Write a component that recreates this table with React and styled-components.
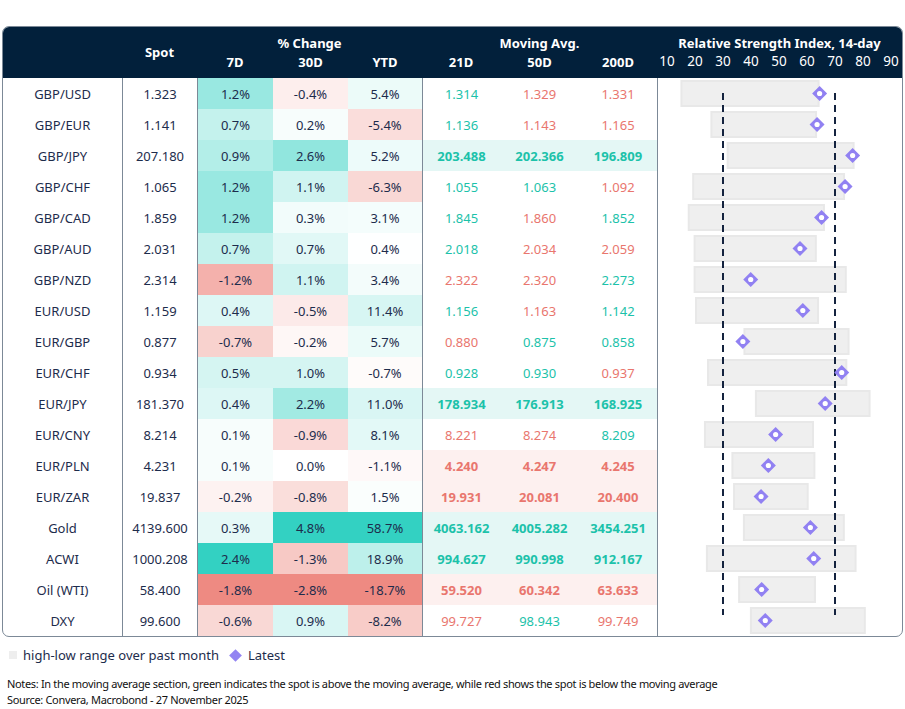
import React from 'react';
import styled, { createGlobalStyle } from 'styled-components';

const GlobalStyle = createGlobalStyle`
  body {
    margin: 0;
    background: #ffffff;
    font-family: 'Noto Sans', 'Open Sans', sans-serif;
    color: #1d2c4c;
  }
`;

const COLS = '119px 75px 76px 75px 74px 78px 79px 78px 245px';
const RULE = '#7c8997';
const ROW_H = 31;

// name, spot, 7D, 30D, YTD, 21D, 50D, 200D, rsi [low, high, latest]
const rows = [
  ['GBP/USD', '1.323', 1.2, -0.4, 5.4, '1.314', '1.329', '1.331', [14.8, 64.5, 64.5]],
  ['GBP/EUR', '1.141', 0.7, 0.2, -5.4, '1.136', '1.143', '1.165', [25.5, 63.6, 63.6]],
  ['GBP/JPY', '207.180', 0.9, 2.6, 5.2, '203.488', '202.366', '196.809', [31.3, 77.0, 76.3]],
  ['GBP/CHF', '1.065', 1.2, 1.1, -6.3, '1.055', '1.063', '1.092', [19.0, 73.6, 73.6]],
  ['GBP/CAD', '1.859', 1.2, 0.3, 3.1, '1.845', '1.860', '1.852', [17.4, 66.4, 65.2]],
  ['GBP/AUD', '2.031', 0.7, 0.7, 0.4, '2.018', '2.034', '2.059', [19.5, 63.5, 57.5]],
  ['GBP/NZD', '2.314', -1.2, 1.1, 3.4, '2.322', '2.320', '2.273', [19.5, 74.2, 39.9]],
  ['EUR/USD', '1.159', 0.4, -0.5, 11.4, '1.156', '1.163', '1.142', [20.0, 64.3, 58.5]],
  ['EUR/GBP', '0.877', -0.7, -0.2, 5.7, '0.880', '0.875', '0.858', [37.3, 75.2, 37.1]],
  ['EUR/CHF', '0.934', 0.5, 1.0, -0.7, '0.928', '0.930', '0.937', [24.3, 74.4, 72.4]],
  ['EUR/JPY', '181.370', 0.4, 2.2, 11.0, '178.934', '176.913', '168.925', [41.4, 82.7, 66.5]],
  ['EUR/CNY', '8.214', 0.1, -0.9, 8.1, '8.221', '8.274', '8.209', [23.2, 62.5, 48.8]],
  ['EUR/PLN', '4.231', 0.1, 0.0, -1.1, '4.240', '4.247', '4.245', [33.0, 63.0, 46.2]],
  ['EUR/ZAR', '19.837', -0.2, -0.8, 1.5, '19.931', '20.081', '20.400', [33.6, 60.6, 43.6]],
  ['Gold', '4139.600', 0.3, 4.8, 58.7, '4063.162', '4005.282', '3454.251', [37.1, 73.5, 61.2]],
  ['ACWI', '1000.208', 2.4, -1.3, 18.9, '994.627', '990.998', '912.167', [23.9, 77.7, 62.4]],
  ['Oil (WTI)', '58.400', -1.8, -2.8, -18.7, '59.520', '60.342', '63.633', [35.4, 63.2, 43.8]],
  ['DXY', '99.600', -0.6, 0.9, -8.2, '99.727', '98.943', '99.749', [39.6, 81.0, 45.1]],
];

const TEAL = [51, 209, 194];
const SALMON = [238, 138, 130];
const GREEN_TXT = '#1cc2aa';
const RED_TXT = '#e9766e';

const mix = (rgb, t) =>
  `rgb(${rgb.map((c) => Math.round(255 - (255 - c) * t)).join(',')})`;

const colMax = [2, 3, 4].map((i) => ({
  pos: Math.max(...rows.map((r) => r[i])),
  neg: Math.min(...rows.map((r) => r[i])),
}));

const heat = (v, c) => {
  if (v === 0) return '#ffffff';
  return v > 0 ? mix(TEAL, v / colMax[c].pos) : mix(SALMON, v / colMax[c].neg);
};

const num = (s) => parseFloat(s);

const Page = styled.div`
  padding: 26px 0 0 2px;
  width: 905px;
  box-sizing: border-box;
`;

const Panel = styled.div`
  width: 901px;
  border: 1px solid ${RULE};
  border-radius: 7px;
  overflow: hidden;
  box-sizing: border-box;
`;

const Head = styled.div`
  display: grid;
  grid-template-columns: ${COLS};
  grid-template-rows: 19px 19px;
  padding: 6px 0 7px;
  background: #02203b;
  color: #ffffff;
  font-weight: 700;
  font-size: 13px;
`;

const HeadCell = styled.div`
  grid-column: ${(p) => p.$col};
  grid-row: ${(p) => p.$row};
  display: flex;
  align-items: center;
  justify-content: center;
  white-space: nowrap;
`;

const Axis = styled.div`
  grid-column: 9;
  grid-row: 2;
  display: flex;
  margin-left: -4px;
  font-weight: 400;
  font-size: 13.5px;
`;

const Tick = styled.span`
  flex: none;
  width: 28px;
  text-align: center;
`;

const Body = styled.div`
  display: grid;
  grid-template-columns: ${COLS};
  grid-auto-rows: ${ROW_H}px;
  font-size: 13px;
`;

const Cell = styled.div`
  display: flex;
  align-items: center;
  justify-content: center;
  box-sizing: border-box;
  background: ${(p) => p.$bg || 'transparent'};
  color: ${(p) => p.$color || '#1d2c4c'};
  font-weight: ${(p) => (p.$bold ? 700 : 400)};
  border-left: ${(p) => (p.$rule ? `1px solid ${RULE}` : 'none')};
`;

const ChartCol = styled.div`
  grid-column: 9;
  grid-row: 1 / span ${rows.length};
  border-left: 1px solid ${RULE};
`;

const Legend = styled.div`
  display: flex;
  align-items: center;
  margin: 9px 0 0 7px;
  font-size: 13px;
  color: #1d2c4c;
`;

const Swatch = styled.span`
  width: 8px;
  height: 8px;
  background: #eeeeee;
  margin-right: 6px;
`;

const Diamond = styled.span`
  width: 9px;
  height: 9px;
  margin: 0 8px 0 12px;
  background: #9384f2;
  transform: rotate(45deg) scale(1, 1);
`;

const Notes = styled.div`
  margin: 12px 0 0 5px;
  font-size: 11px;
  line-height: 16px;
  color: #111111;
  letter-spacing: -0.33px;
`;

const x = (v) => 9 + (v - 10) * 2.8;

const RsiChart = () => {
  const h = rows.length * ROW_H;
  return (
    <svg width="244" height={h} viewBox={`0 0 244 ${h}`}>
      {rows.map((r, i) => {
        const [lo, hi] = r[8];
        return (
          <rect
            key={r[0]}
            x={x(lo) + 1}
            y={i * ROW_H + 3}
            width={x(hi) - x(lo) - 2}
            height={25}
            fill="#efefef"
            stroke="#e8e8e8"
            strokeWidth="2"
          />
        );
      })}
      {[30, 70].map((v) => (
        <line
          key={v}
          x1={x(v)}
          x2={x(v)}
          y1={15}
          y2={h - 21}
          stroke="#14233f"
          strokeWidth="2"
          strokeDasharray="7 5"
        />
      ))}
      {rows.map((r, i) => {
        const cx = x(r[8][2]);
        const cy = i * ROW_H + 15.5;
        return (
          <g key={r[0]}>
            <path
              d={`M${cx} ${cy - 7.5} L${cx + 7.5} ${cy} L${cx} ${cy + 7.5} L${cx - 7.5} ${cy} Z`}
              fill="#9181f2"
            />
            <circle cx={cx} cy={cy} r="2.6" fill="#ffffff" />
          </g>
        );
      })}
    </svg>
  );
};

const Row = ({ r }) => {
  const spot = num(r[1]);
  const mas = [r[5], r[6], r[7]];
  const above = mas.map((m) => spot > num(m));
  const allUp = above.every(Boolean);
  const allDown = above.every((a) => !a);
  const strong = allUp || allDown;
  const maBg = allUp ? '#e4f7f5' : allDown ? '#fdf0ef' : undefined;
  return (
    <>
      <Cell>{r[0]}</Cell>
      <Cell $rule>{r[1]}</Cell>
      {[2, 3, 4].map((i, c) => (
        <Cell key={i} $rule={c === 0} $bg={heat(r[i], c)}>
          {`${r[i].toFixed(1)}%`}
        </Cell>
      ))}
      {mas.map((m, c) => (
        <Cell
          key={c}
          $rule={c === 0}
          $bg={maBg}
          $bold={strong}
          $color={above[c] ? GREEN_TXT : RED_TXT}
        >
          {m}
        </Cell>
      ))}
    </>
  );
};

const App = () => (
  <Page>
    <GlobalStyle />
    <Panel>
      <Head>
        <HeadCell $col="2" $row="1 / span 2">Spot</HeadCell>
        <HeadCell $col="3 / span 3" $row="1">% Change</HeadCell>
        <HeadCell $col="3" $row="2">7D</HeadCell>
        <HeadCell $col="4" $row="2">30D</HeadCell>
        <HeadCell $col="5" $row="2">YTD</HeadCell>
        <HeadCell $col="6 / span 3" $row="1">Moving Avg.</HeadCell>
        <HeadCell $col="6" $row="2">21D</HeadCell>
        <HeadCell $col="7" $row="2">50D</HeadCell>
        <HeadCell $col="8" $row="2">200D</HeadCell>
        <HeadCell $col="9" $row="1">Relative Strength Index, 14-day</HeadCell>
        <Axis>
          {[10, 20, 30, 40, 50, 60, 70, 80, 90].map((t) => (
            <Tick key={t}>{t}</Tick>
          ))}
        </Axis>
      </Head>
      <Body>
        {rows.map((r) => (
          <Row key={r[0]} r={r} />
        ))}
        <ChartCol>
          <RsiChart />
        </ChartCol>
      </Body>
    </Panel>
    <Legend>
      <Swatch />
      high-low range over past month
      <Diamond />
      Latest
    </Legend>
    <Notes>
      Notes: In the moving average section, green indicates the spot is above the moving
      average, while red shows the spot is below the moving average
      <br />
      Source: Convera, Macrobond - 27 November 2025
    </Notes>
  </Page>
);

export default App;
